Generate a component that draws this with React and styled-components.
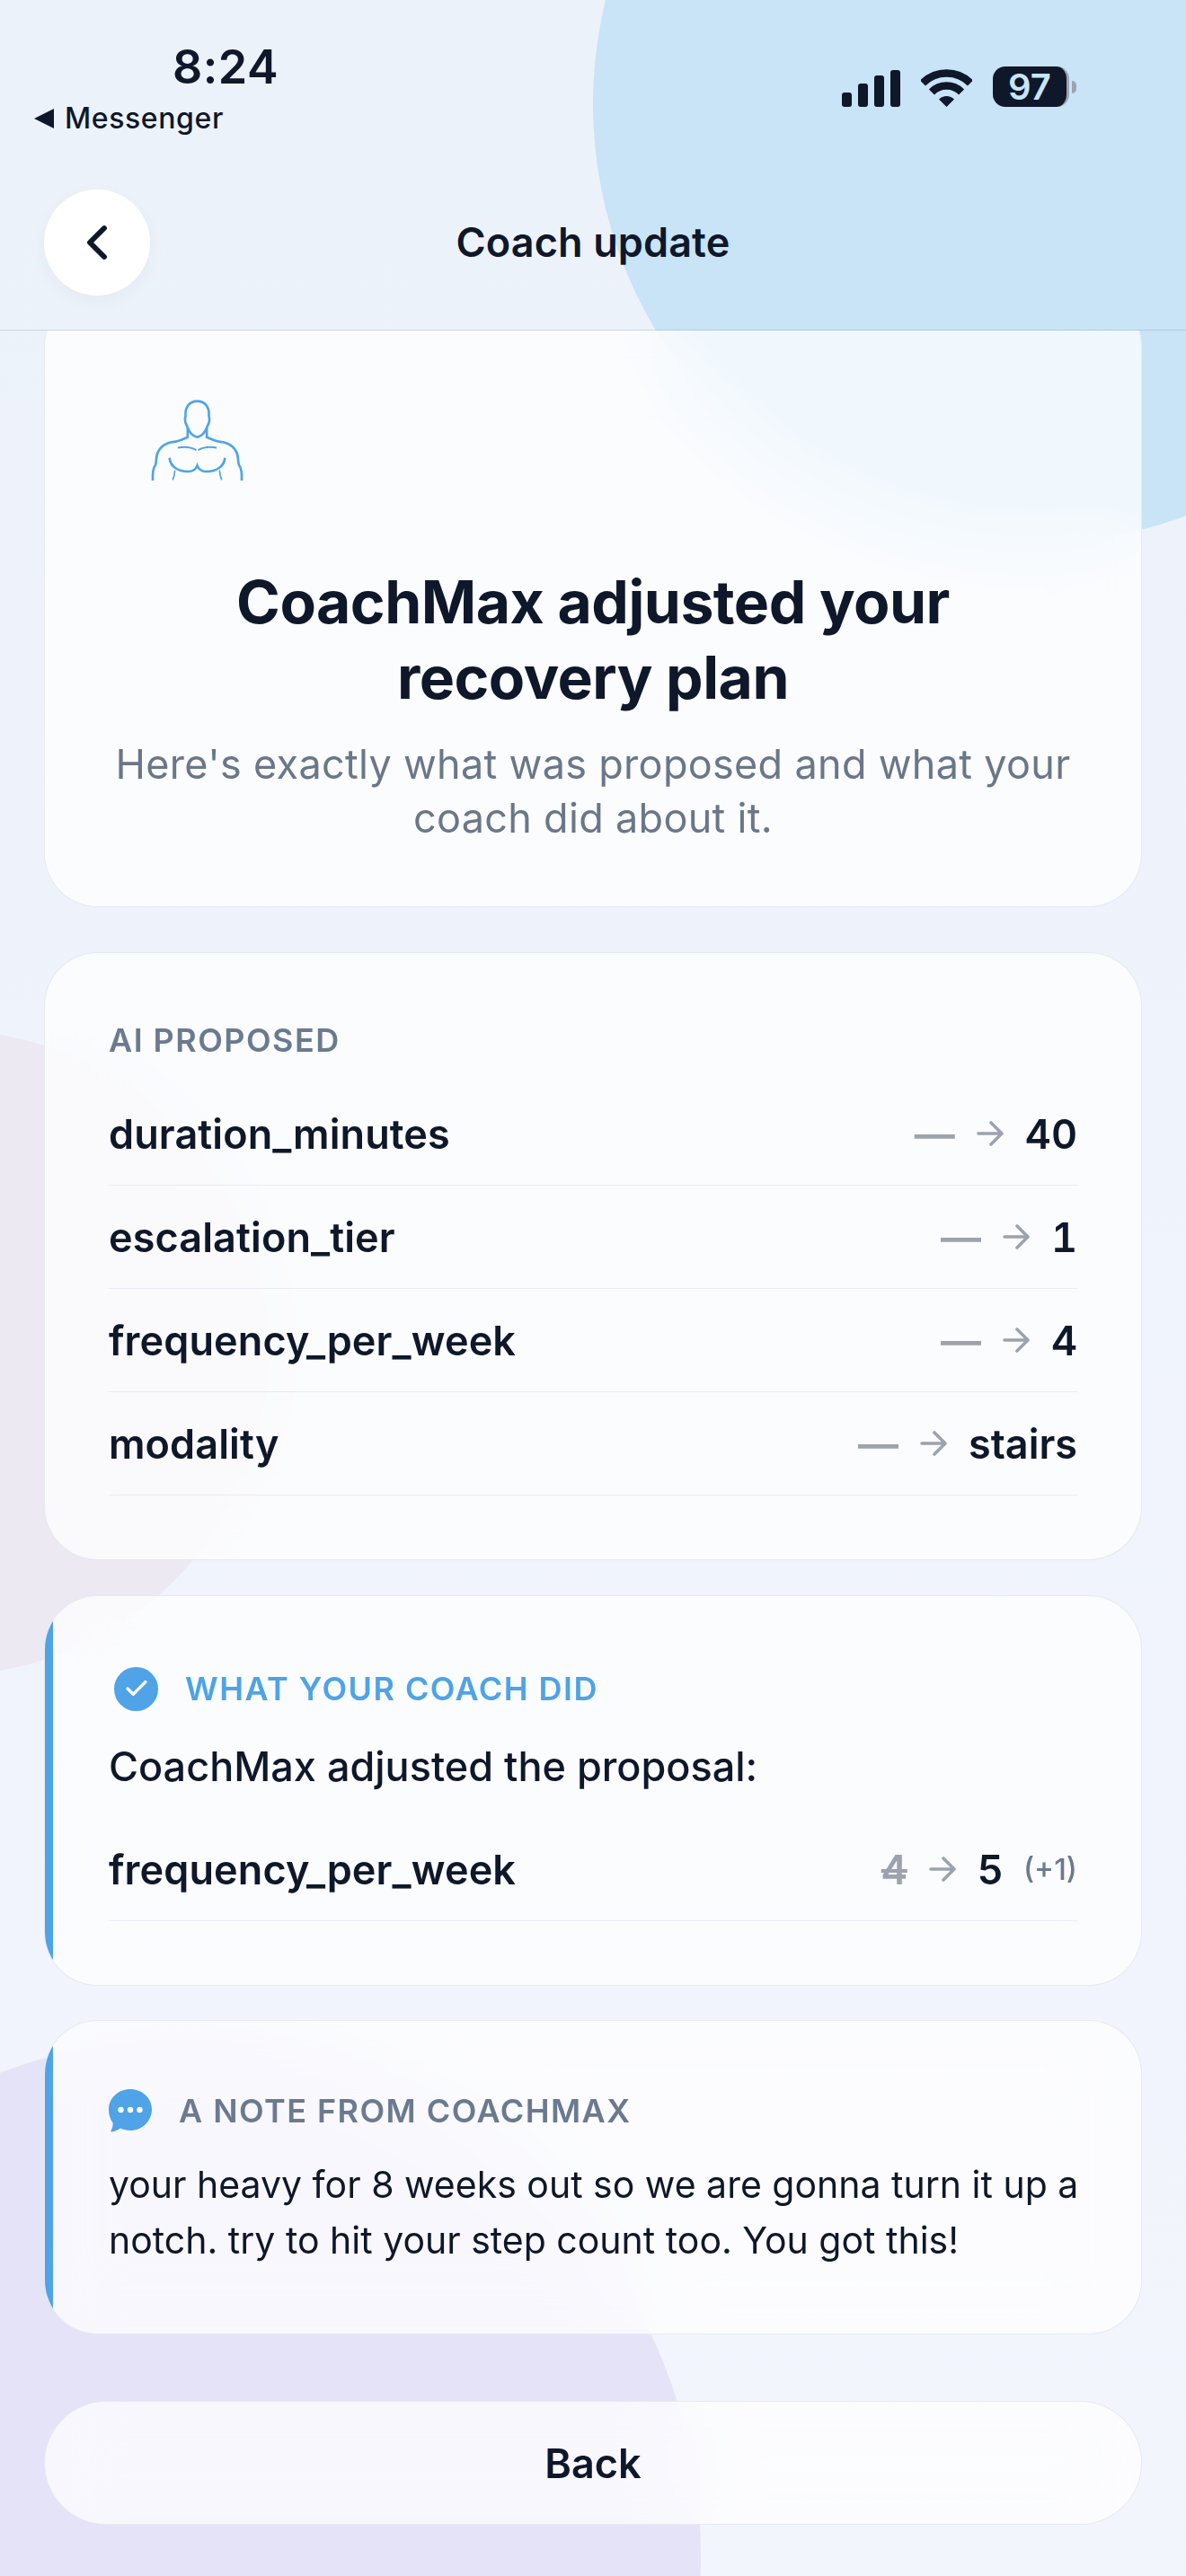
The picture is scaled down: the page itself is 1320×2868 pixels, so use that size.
import React from "react";
import styled, { createGlobalStyle } from "styled-components";
import { ChevronLeft, Check } from "lucide-react";

const proposed = [
  { name: "duration_minutes", value: "40" },
  { name: "escalation_tier", value: "1" },
  { name: "frequency_per_week", value: "4" },
  { name: "modality", value: "stairs" },
];

export default function App() {
  return (
    <Screen>
      <GlobalStyle />
      <BlueBlob />
      <GreyBlob />
      <PurpleBlob />

      <StatusBar>
        <StatusLeft>
          <Time>8:24</Time>
          <ReturnLink>
            <ReturnArrow />
            Messenger
          </ReturnLink>
        </StatusLeft>
        <StatusRight>
          <Signal>
            <SignalBar $h={16} />
            <SignalBar $h={26} />
            <SignalBar $h={35} />
            <SignalBar $h={41} />
          </Signal>
          <WifiIcon />
          <Battery>
            <BatteryBody>97</BatteryBody>
            <BatteryNub />
          </Battery>
        </StatusRight>
      </StatusBar>

      <NavBar>
        <RoundButton aria-label="Back">
          <ChevronLeft size={64} strokeWidth={2.2} />
        </RoundButton>
        <NavTitle>Coach update</NavTitle>
      </NavBar>

      <Scroller>
        <HeroCard>
          <BodyIcon />
          <HeroTitle>
            CoachMax adjusted your
            <br />
            recovery plan
          </HeroTitle>
          <HeroText>
            Here's exactly what was proposed and what your
            <br />
            coach did about it.
          </HeroText>
        </HeroCard>

        <ProposedCard>
          <SectionLabel $below={22}>AI PROPOSED</SectionLabel>
          {proposed.map((row) => (
            <Row key={row.name}>
              <RowName>{row.name}</RowName>
              <RowValues>
                <Muted>—</Muted>
                <ArrowGlyph />
                <Value>{row.value}</Value>
              </RowValues>
            </Row>
          ))}
        </ProposedCard>

        <ActionCard>
          <CardHead>
            <CheckBadge>
              <Check size={30} strokeWidth={2.6} color="#fff" />
            </CheckBadge>
            <SectionLabel $accent>WHAT YOUR COACH DID</SectionLabel>
          </CardHead>
          <BodyLine>CoachMax adjusted the proposal:</BodyLine>
          <Row>
            <RowName>frequency_per_week</RowName>
            <RowValues>
              <Struck>4</Struck>
              <ArrowGlyph />
              <Value>5</Value>
              <Delta>(+1)</Delta>
            </RowValues>
          </Row>
        </ActionCard>

        <NoteCard>
          <CardHead $gap={30}>
            <ChatIcon />
            <SectionLabel>A NOTE FROM COACHMAX</SectionLabel>
          </CardHead>
          <NoteText>
            your heavy for 8 weeks out so we are gonna turn it up a
            <br />
            notch. try to hit your step count too. You got this!
          </NoteText>
        </NoteCard>

        <BackButton>Back</BackButton>
      </Scroller>
    </Screen>
  );
}

function WifiIcon() {
  return (
    <svg width="57" height="42" viewBox="0 0 57 42" fill="none">
      <path d="M2 15.5A37.5 37.5 0 0 1 55 15.5" stroke="#0f172a" strokeWidth="8.5" />
      <path d="M11.9 25.4A23.5 23.5 0 0 1 45.1 25.4" stroke="#0f172a" strokeWidth="8.5" />
      <path d="M28.5 42L20 33.5A12 12 0 0 1 37 33.5Z" fill="#0f172a" />
    </svg>
  );
}

function BodyIcon() {
  return (
    <BodySvg viewBox="140 65 320 280" fill="none" stroke="#4fa3e6" strokeWidth="8">
      <path d="M300 197C283 192 272 178 266 160C260 150 258 135 261 125C258 95 275 76 300 76C325 76 342 95 339 125C342 135 340 150 334 160C328 178 317 192 300 197Z" />
      <path d="M268 165V197C250 204 235 212 222 212C190 215 165 235 163 270C163 280 162 285 160 290C152 300 150 320 151 342" />
      <path d="M332 165V197C350 204 365 212 378 212C410 215 435 235 437 270C437 280 438 285 440 290C448 300 450 320 449 342" />
      <path d="M235 232C255 228 280 230 297 240M365 232C345 228 320 230 303 240" strokeWidth="6" />
      <path d="M207 266C210 295 235 312 270 312C285 312 295 305 300 292C305 305 315 312 330 312C365 312 390 295 393 266" />
      <path d="M225 308C225 320 222 330 218 340M375 308C375 320 378 330 382 340" strokeWidth="5" />
    </BodySvg>
  );
}

function ChatIcon() {
  return (
    <svg width="48" height="48" viewBox="0 0 48 48">
      <path
        d="M24 0C37 0 48 9.5 48 22.5C48 35.5 37 46 24 46C20 46 16 45 13 43.5C10 45.5 6.5 47 3.5 47.5C2.5 47.7 2 46.8 2.6 46C4 44 4.7 41 4.6 37.5C1.6 33.5 0 28.5 0 22.5C0 9.5 11 0 24 0Z"
        fill="#4fa3e6"
      />
      <circle cx="13.5" cy="23" r="3.2" fill="#fff" />
      <circle cx="24" cy="23" r="3.2" fill="#fff" />
      <circle cx="34.5" cy="23" r="3.2" fill="#fff" />
    </svg>
  );
}

function ArrowGlyph() {
  return (
    <svg width="30" height="28" viewBox="0 0 30 28" fill="none" stroke="#9ca3af" strokeWidth="3.6" strokeLinecap="round" strokeLinejoin="round">
      <path d="M2 14H28M16 2L28 14L16 26" />
    </svg>
  );
}

const GlobalStyle = createGlobalStyle`
  html, body {
    margin: 0;
    padding: 0;
  }
  body {
    font-family: Inter, "Noto Sans", sans-serif;
    color: #0f172a;
  }
`;

const Screen = styled.div`
  position: relative;
  width: 1320px;
  height: 2868px;
  overflow: hidden;
  background: linear-gradient(180deg, #ecf2fa 0%, #f3f5fd 100%);
`;

const Blob = styled.div`
  position: absolute;
  border-radius: 50%;
`;

const BlueBlob = styled(Blob)`
  left: 660px;
  top: -373px;
  width: 978px;
  height: 978px;
  background: #c8e4f6;
`;

const GreyBlob = styled(Blob)`
  left: -419px;
  top: 1147px;
  width: 718px;
  height: 718px;
  background: #ece9f3;
`;

const PurpleBlob = styled(Blob)`
  left: -370px;
  top: 2270px;
  width: 1150px;
  height: 1150px;
  background: #e5e3f7;
`;

const StatusBar = styled.div`
  position: relative;
  display: flex;
  justify-content: space-between;
  height: 211px;
  box-sizing: border-box;
  padding: 44px 122px 0 38px;
`;

const StatusLeft = styled.div`
  display: flex;
  flex-direction: column;
`;

const Time = styled.div`
  margin-left: 154px;
  font-size: 52px;
  font-weight: 600;
  line-height: 62px;
  letter-spacing: 0.5px;
`;

const ReturnLink = styled.div`
  display: flex;
  align-items: center;
  gap: 12px;
  margin-top: 6px;
  font-size: 32px;
  font-weight: 500;
  line-height: 40px;
  letter-spacing: 0.6px;
`;

const ReturnArrow = styled.span`
  width: 0;
  height: 0;
  border-top: 11px solid transparent;
  border-bottom: 11px solid transparent;
  border-right: 22px solid #0f172a;
`;

const StatusRight = styled.div`
  display: flex;
  align-items: flex-end;
  align-self: flex-start;
  gap: 23px;
  margin-top: 30px;
`;

const Signal = styled.div`
  display: flex;
  align-items: flex-end;
  gap: 7px;
`;

const SignalBar = styled.span`
  width: 11px;
  height: ${(p) => p.$h}px;
  border-radius: 3px;
  background: #0f172a;
`;

const Battery = styled.div`
  display: flex;
  align-items: center;
  gap: 3px;
`;

const BatteryBody = styled.div`
  width: 82px;
  height: 45px;
  border-radius: 14px;
  border-right: 3px solid #9ca3af;
  background: #0f172a;
  color: #c8e4f6;
  font-size: 40px;
  font-weight: 600;
  line-height: 45px;
  text-align: center;
`;

const BatteryNub = styled.span`
  width: 5px;
  height: 14px;
  border-radius: 0 5px 5px 0;
  background: #9ca3af;
`;

const NavBar = styled.div`
  position: relative;
  display: grid;
  grid-template-columns: 1fr auto 1fr;
  align-items: center;
  height: 157px;
  box-sizing: border-box;
  padding: 0 49px 38px;
  border-bottom: 1px solid rgba(100, 116, 139, 0.22);
`;

const RoundButton = styled.button`
  display: flex;
  align-items: center;
  justify-content: center;
  width: 118px;
  height: 118px;
  padding: 0;
  border: 0;
  border-radius: 50%;
  background: #fff;
  color: #0f172a;
  box-shadow: 0 6px 20px rgba(15, 23, 42, 0.04);
`;

const NavTitle = styled.div`
  font-size: 45px;
  font-weight: 600;
  line-height: 56px;
  letter-spacing: 0.1px;
`;

const Scroller = styled.div`
  position: relative;
  height: 2500px;
  overflow: hidden;
  padding: 0 49px;
`;

const Card = styled.section`
  position: relative;
  overflow: hidden;
  box-sizing: border-box;
  border: 1px solid rgba(226, 232, 240, 0.9);
  border-radius: 60px;
  background: rgba(255, 255, 255, 0.72);
  backdrop-filter: blur(40px);
`;

const HeroCard = styled(Card)`
  display: flex;
  flex-direction: column;
  align-items: center;
  height: 685px;
  margin-top: -43px;
  padding-top: 117px;
`;

const BodySvg = styled.svg`
  align-self: flex-start;
  width: 107px;
  height: 93px;
  margin-left: 116px;
`;

const HeroTitle = styled.h1`
  margin: 92px 0 0;
  font-size: 66px;
  font-weight: 700;
  line-height: 84px;
  letter-spacing: -0.5px;
  text-align: center;
`;

const HeroText = styled.p`
  margin: 25px 0 0;
  color: #6b7689;
  font-size: 45px;
  line-height: 60px;
  letter-spacing: 0.3px;
  text-align: center;
`;

const ProposedCard = styled(Card)`
  height: 677px;
  margin-top: 50px;
  padding: 72px 71px 0;
`;

const SectionLabel = styled.div`
  margin-bottom: ${(p) => p.$below || 0}px;
  color: ${(p) => (p.$accent ? "#4fa3e6" : "#6b7a90")};
  font-size: 36px;
  font-weight: 600;
  line-height: 50px;
  letter-spacing: 1.45px;
`;

const Row = styled.div`
  display: flex;
  align-items: center;
  justify-content: space-between;
  height: 115px;
  box-sizing: border-box;
  border-bottom: 1px solid #e8ecf3;
`;

const RowName = styled.div`
  font-size: 45px;
  font-weight: 600;
  letter-spacing: 0.1px;
`;

const RowValues = styled.div`
  display: flex;
  align-items: center;
  gap: 24px;
  font-size: 45px;
  font-weight: 600;
  font-variant-numeric: tabular-nums;
`;

const Muted = styled.span`
  color: #9ca3af;
`;

const Value = styled.span`
  color: #0f172a;
`;

const Struck = styled.span`
  color: #9ca3af;
  text-decoration: line-through;
`;

const Delta = styled.span`
  margin-left: -2px;
  color: #6b7a90;
  font-size: 33px;
  font-weight: 500;
  font-variant-numeric: normal;
`;

const AccentCard = styled(Card)`
  &::before {
    content: "";
    position: absolute;
    top: 0;
    bottom: 0;
    left: 0;
    width: 9px;
    background: #4fa3e6;
  }
`;

const ActionCard = styled(AccentCard)`
  height: 435px;
  margin-top: 39px;
  padding: 78px 71px 0;
`;

const CardHead = styled.div`
  display: flex;
  align-items: center;
  gap: ${(p) => p.$gap || 30}px;
`;

const CheckBadge = styled.span`
  display: flex;
  align-items: center;
  justify-content: center;
  width: 49px;
  height: 49px;
  margin-left: 6px;
  border-radius: 50%;
  background: #4fa3e6;
`;

const BodyLine = styled.div`
  margin: 32px 0 27px;
  font-size: 45px;
  font-weight: 500;
  line-height: 60px;
`;

const NoteCard = styled(AccentCard)`
  height: 350px;
  margin-top: 38px;
  padding: 75px 71px 0;
`;

const NoteText = styled.p`
  margin: 26px -20px 0 0;
  font-size: 41px;
  line-height: 62px;
  white-space: nowrap;
`;

const BackButton = styled.button`
  display: block;
  width: 100%;
  height: 138px;
  margin-top: 74px;
  border: 1px solid rgba(226, 232, 240, 0.9);
  border-radius: 69px;
  background: rgba(255, 255, 255, 0.72);
  backdrop-filter: blur(40px);
  color: #0f172a;
  font-family: inherit;
  font-size: 45px;
  font-weight: 600;
`;
